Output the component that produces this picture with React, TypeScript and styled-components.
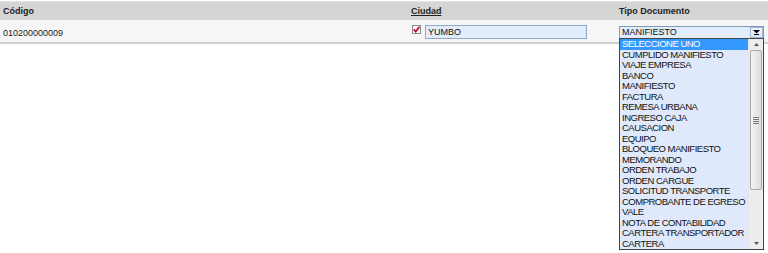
import React from "react";
import styled, { createGlobalStyle } from "styled-components";

const Global = createGlobalStyle`
  html, body { margin: 0; padding: 0; background: #fff; }
  body { font-family: "Liberation Sans", Arial, sans-serif; }
`;

const Page = styled.div`
  width: 768px;
  height: 253px;
  position: relative;
  overflow: hidden;
  background: #fff;
`;

const Grid = styled.div`
  display: grid;
  grid-template-columns: 408px 208px 1fr;
`;

const HeadCell = styled.div<{ $underline?: boolean }>`
  height: 19px;
  margin-top: 1px;
  background: #d5d5d5;
  border-top: 1px solid #e2e2e2;
  box-sizing: border-box;
  padding: 4px 0 0 3px;
  font-size: 9px;
  font-weight: bold;
  color: #222;
  text-decoration: ${(p) => (p.$underline ? "underline" : "none")};
`;

const BodyCell = styled.div`
  height: 24px;
  background: #f6f6f6;
  border-bottom: 2px solid #cfcfcf;
  box-sizing: border-box;
  display: flex;
  align-items: flex-start;
  padding: 5px 0 0 3px;
  font-size: 9px;
  color: #222;
  gap: 4px;
`;

const PlainText = styled.span`
  margin-top: 3px;
`;

const CheckBox = styled.span`
  width: 9px;
  height: 9px;
  margin-left: 1px;
  box-sizing: border-box;
  border: 1px solid #8a8a8a;
  background: #fff;
  display: inline-flex;
  align-items: center;
  justify-content: center;
`;

const TextInput = styled.div`
  width: 162px;
  height: 14px;
  box-sizing: border-box;
  border: 1px solid #8fa9c9;
  background: #e2ecfb;
  font-size: 9px;
  color: #111;
  padding: 1px 0 0 2px;
  line-height: 11px;
`;

const SelectBox = styled.div`
  width: 145px;
  height: 13px;
  margin-top: 1px;
  box-sizing: border-box;
  border: 1px solid #7f9db9;
  background: #e2ecfb;
  display: flex;
  align-items: stretch;
  font-size: 9px;
  color: #111;
`;

const SelectText = styled.div`
  flex: 1;
  padding: 0 0 0 2px;
  line-height: 11px;
`;

const SelectBtn = styled.div`
  width: 13px;
  box-sizing: border-box;
  border: 1px solid #9fb6d6;
  background: linear-gradient(#f4f7fc, #dbe5f3);
  display: flex;
  align-items: center;
  justify-content: center;
`;

const ListBox = styled.div`
  position: absolute;
  left: 619px;
  top: 38px;
  width: 145px;
  height: 212px;
  box-sizing: border-box;
  border: 1px solid #444;
  background: #dfe9fb;
  display: flex;
`;

const Options = styled.div`
  flex: 1;
`;

const Option = styled.div<{ $sel?: boolean }>`
  height: 10.5px;
  line-height: 10.5px;
  font-size: 9.5px;
  letter-spacing: -0.5px;
  padding-left: 2px;
  color: ${(p) => (p.$sel ? "#fff" : "#111")};
  background: ${(p) => (p.$sel ? "#3399ff" : "transparent")};
  white-space: nowrap;
  overflow: hidden;
`;

const ScrollBar = styled.div`
  width: 14px;
  background: #ededed;
  border-left: 1px solid #e4e4e4;
  display: flex;
  flex-direction: column;
`;

const ScrollArrow = styled.div`
  height: 11px;
  display: flex;
  align-items: center;
  justify-content: center;
`;

const Thumb = styled.div`
  height: 140px;
  margin: 0 1px;
  box-sizing: border-box;
  border: 1px solid #a8a8a8;
  border-radius: 2px;
  background: linear-gradient(90deg, #f4f4f4, #dcdcdc);
  display: flex;
  flex-direction: column;
  align-items: center;
  justify-content: center;
  gap: 1px;
`;

const Grip = styled.span`
  width: 6px;
  height: 1px;
  background: #777;
`;

const Track = styled.div`
  flex: 1;
`;

const options = [
  "SELECCIONE UNO",
  "CUMPLIDO MANIFIESTO",
  "VIAJE EMPRESA",
  "BANCO",
  "MANIFIESTO",
  "FACTURA",
  "REMESA URBANA",
  "INGRESO CAJA",
  "CAUSACION",
  "EQUIPO",
  "BLOQUEO MANIFIESTO",
  "MEMORANDO",
  "ORDEN TRABAJO",
  "ORDEN CARGUE",
  "SOLICITUD TRANSPORTE",
  "COMPROBANTE DE EGRESO",
  "VALE",
  "NOTA DE CONTABILIDAD",
  "CARTERA TRANSPORTADOR",
  "CARTERA",
];

export default function App() {
  return (
    <Page>
      <Global />
      <Grid>
        <HeadCell>Código</HeadCell>
        <HeadCell $underline>Ciudad</HeadCell>
        <HeadCell>Tipo Documento</HeadCell>
        <BodyCell>
          <PlainText>010200000009</PlainText>
        </BodyCell>
        <BodyCell>
          <CheckBox>
            <svg width="7" height="7" viewBox="0 0 7 7">
              <path d="M0.8 3.4 L2.7 5.6 L6.4 0.8" stroke="#c0102a" strokeWidth="1.8" fill="none" />
            </svg>
          </CheckBox>
          <TextInput>YUMBO</TextInput>
        </BodyCell>
        <BodyCell>
          <SelectBox>
            <SelectText>MANIFIESTO</SelectText>
            <SelectBtn>
              <svg width="7" height="5" viewBox="0 0 7 5">
                <path d="M0 0 H7 L3.5 3.5 Z" fill="#000" />
                <rect x="1" y="4" width="5" height="1" fill="#000" />
              </svg>
            </SelectBtn>
          </SelectBox>
        </BodyCell>
      </Grid>
      <ListBox>
        <Options>
          {options.map((o, i) => (
            <Option key={o} $sel={i === 0}>
              {o}
            </Option>
          ))}
        </Options>
        <ScrollBar>
          <ScrollArrow>
            <svg width="5" height="3" viewBox="0 0 5 3">
              <path d="M0 3 L2.5 0 L5 3 Z" fill="#555" />
            </svg>
          </ScrollArrow>
          <Thumb>
            <Grip />
            <Grip />
            <Grip />
            <Grip />
          </Thumb>
          <Track />
          <ScrollArrow>
            <svg width="5" height="3" viewBox="0 0 5 3">
              <path d="M0 0 L5 0 L2.5 3 Z" fill="#555" />
            </svg>
          </ScrollArrow>
        </ScrollBar>
      </ListBox>
    </Page>
  );
}
